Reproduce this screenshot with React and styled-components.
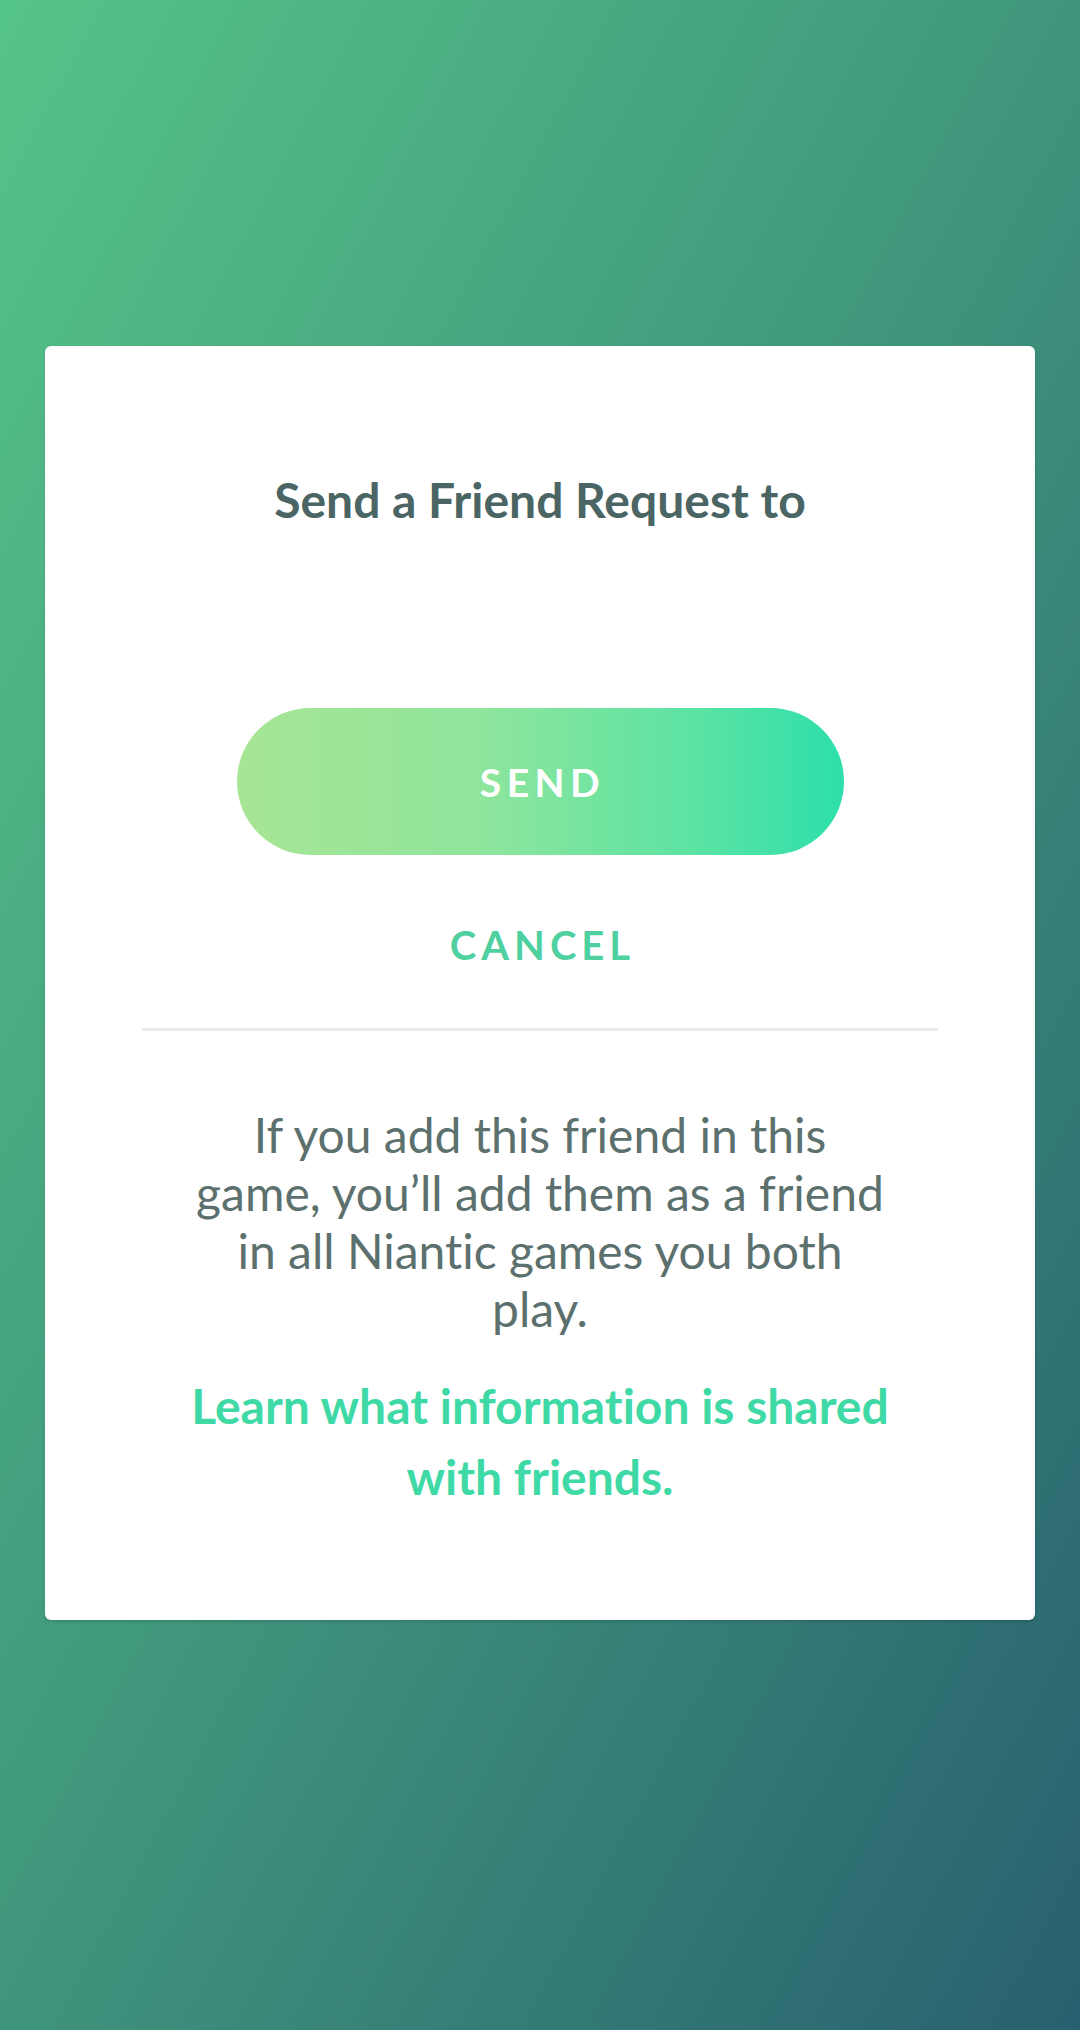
import styled, { createGlobalStyle } from "styled-components";

const GlobalStyle = createGlobalStyle`
  html, body {
    margin: 0;
    padding: 0;
  }
  body {
    font-family: Lato, "Noto Sans", sans-serif;
    font-variant-ligatures: no-common-ligatures;
  }
`;

const App = () => {
  return (
    <>
      <GlobalStyle />
      <Screen>
        <Dialog>
          <Title>Send a Friend Request to</Title>
          <SendButton>SEND</SendButton>
          <CancelButton>CANCEL</CancelButton>
          <Divider />
          <Notice>
            If you add this friend in this
            <br />
            game, you’ll add them as a friend
            <br />
            in all Niantic games you both
            <br />
            play.
          </Notice>
          <LearnLink>
            Learn what information is shared
            <br />
            with friends.
          </LearnLink>
        </Dialog>
      </Screen>
    </>
  );
};
export default App;

const Screen = styled.div`
  width: 1080px;
  height: 2030px;
  box-sizing: border-box;
  padding: 346px 45px 0;
  background: linear-gradient(to bottom right, #55c488 0%, #3f957c 50%, #28606f 100%);
  overflow: hidden;
`;

const Dialog = styled.div`
  width: 990px;
  height: 1274px;
  box-sizing: border-box;
  padding-top: 128px;
  background-color: #ffffff;
  border-radius: 6px;
  box-shadow: 0 2px 3px rgba(0, 0, 0, 0.12);
  display: flex;
  flex-direction: column;
  align-items: center;
`;

const Title = styled.h1`
  margin: 0;
  font-family: Lato, sans-serif;
  font-weight: 700;
  font-size: 48px;
  line-height: 52px;
  color: #4a6563;
`;

const SendButton = styled.button`
  margin-top: 182px;
  width: 607px;
  height: 147px;
  border: none;
  border-radius: 74px;
  background: linear-gradient(to right, #a8e595 0%, #8fe59c 40%, #5ce3a3 75%, #2ddfab 100%);
  color: #ffffff;
  font-family: Lato, sans-serif;
  font-weight: 700;
  font-size: 39px;
  letter-spacing: 5.5px;
  padding: 0 0 0 5px;
`;

const CancelButton = styled.button`
  margin-top: 50px;
  border: none;
  background: none;
  padding: 0 0 0 5px;
  height: 80px;
  color: #4fd0a0;
  font-family: Lato, sans-serif;
  font-weight: 700;
  font-size: 40px;
  letter-spacing: 5px;
`;

const Divider = styled.div`
  margin-top: 43px;
  width: 796px;
  height: 3px;
  background-color: #e8ece9;
`;

const Notice = styled.p`
  margin: 75px 0 0;
  text-align: center;
  font-family: Lato, sans-serif;
  font-weight: 400;
  font-size: 48px;
  line-height: 58px;
  color: #5c706e;
`;

const LearnLink = styled.a`
  margin-top: 32px;
  text-align: center;
  font-family: Lato, sans-serif;
  font-weight: 700;
  font-size: 48px;
  line-height: 71px;
  color: #3fd9a6;
  cursor: pointer;
`;
